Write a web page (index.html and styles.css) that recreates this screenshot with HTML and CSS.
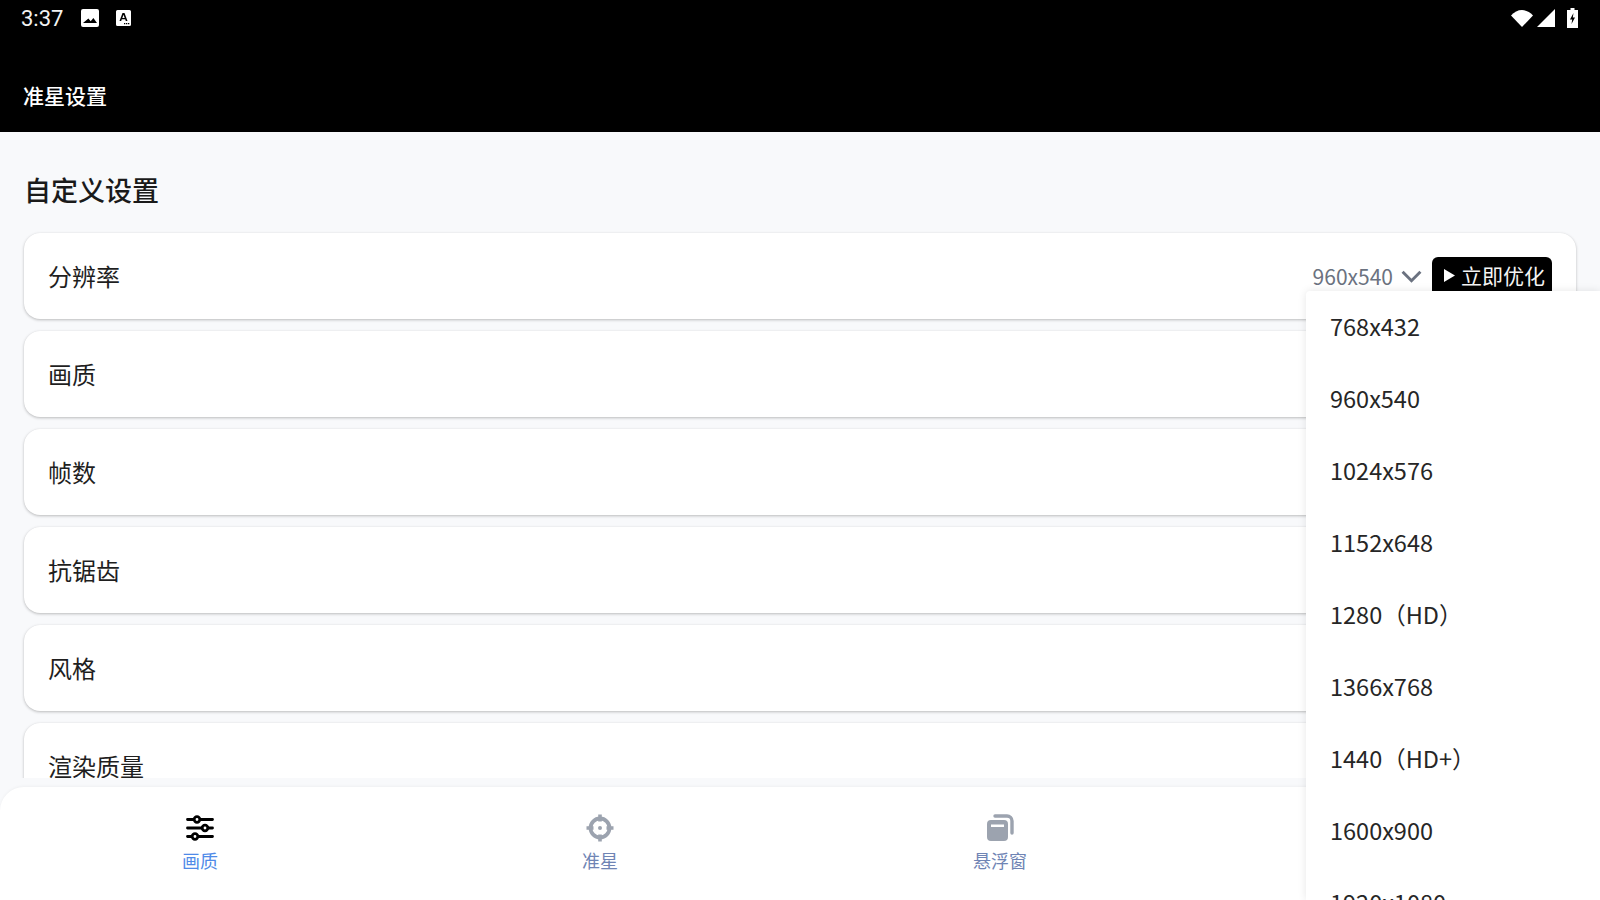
FILE: index.html
```html
<!DOCTYPE html>
<html lang="zh-CN">
<head>
<meta charset="utf-8">
<title>准星设置</title>
<link rel="stylesheet" href="styles.css">
</head>
<body>
<div class="app">
  <header class="appbar">
    <div class="status">
      <div class="status-left">
        <span class="time">3:37</span>
        <svg class="ic-photo" viewBox="0 0 18 18"><path fill="#fff" fill-rule="evenodd" d="M2 0h14a2 2 0 0 1 2 2v14a2 2 0 0 1-2 2H2a2 2 0 0 1-2-2V2a2 2 0 0 1 2-2zM2 14h14l-3.6-5-2.7 3.2L7.4 9.4z"/></svg>
        <svg class="ic-a" viewBox="0 0 15 16"><path fill="#fff" d="M1.500 0h12A1.500 1.500 0 0 1 15 1.500v13a1.500 1.500 0 0 1-1.500 1.500h-12A1.500 1.500 0 0 1 0 14.500v-13A1.500 1.500 0 0 1 1.500 0z"/><path fill="#000" fill-rule="evenodd" d="M6.500 3h2l3 8H9.800l-.6-1.700H5.800L5.200 11H3.500zM7.500 4.800 6.300 8h2.400z"/><path fill="#000" d="M8 13h1.300v1.200H8zM10 13h1.300v1.200H10zM12 13h1.300v1.200H12z"/></svg>
      </div>
      <div class="status-right">
        <svg class="ic-wifi" viewBox="0 0 22 17"><path fill="#fff" d="M0 5.500C3 2 7 0 11 0s8 2 11 5.500L11 17z"/></svg>
        <svg class="ic-signal" viewBox="0 0 18 18"><path fill="#fff" d="M18 0v18H0z"/></svg>
        <svg class="ic-batt" viewBox="0 0 11 20"><path fill="#fff" fill-rule="evenodd" d="M3.500 0h4v2H11v18H0V2h3.500zM6.500 5 3 11.500h2.200L4.500 16 8 9.500H5.800z"/></svg>
      </div>
    </div>
    <div class="title">准星设置</div>
  </header>

  <main class="content">
    <h1 class="section-title">自定义设置</h1>
    <div class="card">
      <span class="label">分辨率</span>
      <div class="card-right">
        <span class="value">960x540</span>
        <svg class="chev" viewBox="0 0 20 12"><path fill="none" stroke="#6b7280" stroke-width="2.800" d="M1.500 1.500 10 10l8.500-8.500"/></svg>
        <button class="optimize"><svg class="play" viewBox="0 0 11 13"><path fill="#fff" d="M0 0l11 6.500L0 13z"/></svg>立即优化</button>
      </div>
    </div>
    <div class="card"><span class="label">画质</span></div>
    <div class="card"><span class="label">帧数</span></div>
    <div class="card"><span class="label">抗锯齿</span></div>
    <div class="card"><span class="label">风格</span></div>
    <div class="card"><span class="label">渲染质量</span></div>
  </main>

  <nav class="tabbar">
    <div class="tab tab-active">
      <svg class="tab-icon" viewBox="0 0 28 24"><g stroke="#000" stroke-width="2.800" stroke-linecap="round" fill="#fff"><path d="M1.500 3.500h25M1.500 12h25M1.500 20.500h25" fill="none"/><circle cx="11" cy="3.500" r="2.800"/><circle cx="19" cy="12" r="2.800"/><circle cx="9" cy="20.500" r="2.800"/></g></svg>
      <span class="tab-text">画质</span>
    </div>
    <div class="tab">
      <svg class="tab-icon" viewBox="0 0 28 28"><g fill="none" stroke="#9ca3af"><circle cx="14" cy="14" r="9.500" stroke-width="3.800"/><path stroke-width="3.600" d="M14 .5v7M14 20.500v7M.5 14h7M20.500 14h7"/></g><circle cx="14" cy="14" r="2" fill="#9ca3af"/></svg>
      <span class="tab-text">准星</span>
    </div>
    <div class="tab">
      <svg class="tab-icon" viewBox="0 0 28 28"><path fill="none" stroke="#9ca3af" stroke-width="3.400" stroke-linecap="round" d="M9 2h12a5 5 0 0 1 5 5v12"/><path fill="#9ca3af" fill-rule="evenodd" d="M5 6h13a4 4 0 0 1 4 4v13a4 4 0 0 1-4 4H5a4 4 0 0 1-4-4V10a4 4 0 0 1 4-4zM5 10.500v2.500h13v-2.500z"/></svg>
      <span class="tab-text">悬浮窗</span>
    </div>
    <div class="tab"></div>
  </nav>

  <ul class="menu">
    <li class="menu-item">768x432</li>
    <li class="menu-item">960x540</li>
    <li class="menu-item">1024x576</li>
    <li class="menu-item">1152x648</li>
    <li class="menu-item">1280（HD）</li>
    <li class="menu-item">1366x768</li>
    <li class="menu-item">1440（HD+）</li>
    <li class="menu-item">1600x900</li>
    <li class="menu-item">1920x1080</li>
  </ul>
</div>
</body>
</html>
```
FILE: styles.css
```css
* { box-sizing: border-box; }
html, body { margin: 0; padding: 0; }
body {
  width: 1600px;
  height: 900px;
  overflow: hidden;
  font-family: "Noto Sans CJK SC", sans-serif;
  background: #f8f9fb;
}
.app {
  position: relative;
  width: 1600px;
  height: 900px;
  display: flex;
  flex-direction: column;
  overflow: hidden;
}
.appbar {
  flex: none;
  height: 132px;
  background: #000;
  color: #fff;
}
.status {
  height: 36px;
  padding: 0 22px 0 21px;
  display: flex;
  align-items: center;
  justify-content: space-between;
}
.status-left, .status-right { display: flex; align-items: center; }
.time { font-family: Roboto, sans-serif; font-size: 22px; line-height: 28px; padding-top: 2px; color: #f2f2f2; width: 61px; }
.ic-photo { width: 18px; height: 18px; margin-left: -1px; }
.ic-a { width: 15px; height: 16px; margin-left: 17px; }
.ic-wifi { width: 22px; height: 17px; }
.ic-signal { width: 18px; height: 18px; margin-left: 4px; }
.ic-batt { width: 11px; height: 20px; margin-left: 12px; }
.title {
  margin-top: 44px;
  padding-left: 23px;
  font-size: 21px;
  line-height: 30px;
  font-weight: 500;
}
.content {
  flex: none;
  height: 646px;
  padding: 0 24px;
  overflow: hidden;
}
.section-title {
  margin: 0;
  padding-top: 40px;
  height: 101px;
  font-size: 27px;
  line-height: 36px;
  font-weight: 500;
  color: #1a1a1a;
}
.card {
  height: 86px;
  margin-bottom: 12px;
  padding: 0 24px;
  display: flex;
  align-items: center;
  justify-content: space-between;
  background: #fff;
  border-radius: 16px;
  box-shadow: 0 1px 3px rgba(0, 0, 0, .25), 0 0 1px rgba(0, 0, 0, .06);
}
.label { font-size: 24px; line-height: 34px; color: #1f1f1f; }
.card-right { display: flex; align-items: center; }
.value { font-size: 21px; color: #6b7280; }
.chev { width: 21px; height: 13px; margin-left: 8px; }
.optimize {
  margin-left: 10px;
  margin-top: 2px;
  height: 40px;
  width: 120px;
  padding: 0 0 4px 12px;
  border: 0;
  border-radius: 6px;
  background: #000;
  color: #f4f4f4;
  font: 21px "Noto Sans CJK SC", sans-serif;
  display: flex;
  align-items: center;
}
.play { width: 11px; height: 13px; margin-right: 6px; }
.tabbar {
  position: absolute;
  left: 0;
  right: 0;
  bottom: 0;
  height: 113px;
  display: grid;
  grid-template-columns: repeat(4, 1fr);
  background: #fff;
  border-radius: 24px 24px 0 0;
  box-shadow: 0 -1px 3px rgba(0, 0, 0, .04);
}
.tab {
  display: flex;
  flex-direction: column;
  align-items: center;
  padding-top: 27px;
}
.tab-icon { width: 28px; height: 28px; }
.tab-text { margin-top: 6px; font-size: 18px; line-height: 24px; color: #6f84b4; }
.tab-active .tab-text { color: #4f8ae8; }
.menu {
  position: absolute;
  left: 1306px;
  top: 291px;
  width: 294px;
  height: 609px;
  margin: 0;
  padding: 0;
  list-style: none;
  overflow: hidden;
  background: #fff;
  border-radius: 4px 0 0 0;
  box-shadow: 0 0 8px rgba(0, 0, 0, .1);
}
.menu-item {
  height: 72px;
  padding: 0 0 2px 24px;
  display: flex;
  align-items: center;
  font-size: 23.500px;
  color: #262626;
}
```
